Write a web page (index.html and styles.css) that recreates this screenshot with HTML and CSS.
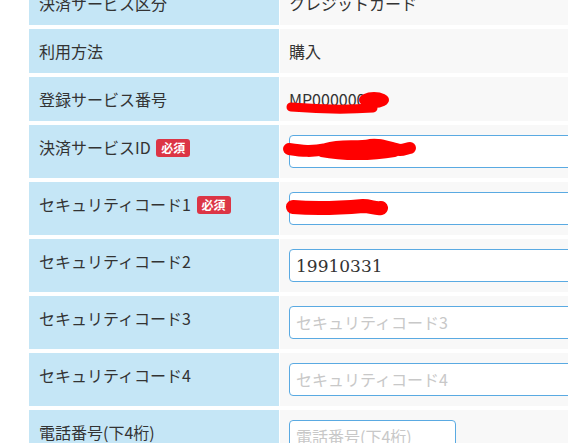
FILE: index.html
```html
<!DOCTYPE html>
<html lang="ja">
<head>
  <meta charset="UTF-8" />
  <meta name="viewport" content="width=device-width, initial-scale=1.0"/>
  <title>決済サービス登録</title>
  <link rel="stylesheet" href="styles.css">
</head>
<body>
  <table class="form-table">
    <tr>
      <th>決済サービス区分</th>
      <td>クレジットカード</td>
    </tr>
    <tr>
      <th>利用方法</th>
      <td>購入</td>
    </tr>
    <tr>
      <th>登録サービス番号</th>
      <td>
        <div class="masked">
          MP0000000
          <!-- 塗りつぶし -->
          <svg class="scribble s1" width="110" height="26" viewBox="0 0 110 26">
            <path d="M6 17 C30 19 60 20 88 18" stroke="#ff0000" stroke-width="9" stroke-linecap="round" fill="none"/>
            <ellipse cx="89" cy="10" rx="15" ry="8" fill="#ff0000"/>
          </svg>
        </div>
      </td>
    </tr>
    <tr>
      <th>決済サービスID <span class="required">必須</span></th>
      <td>
        <div class="masked">
          <input type="text" class="field" value="">
          <svg class="scribble s2" width="134" height="28" viewBox="0 0 134 28">
            <path d="M7 13 C20 15 30 16 44 13 C60 8 75 12 88 9 C100 7 110 13 118 14 C122 14 126 12 128 12" stroke="#ff0000" stroke-width="12" stroke-linecap="round" stroke-linejoin="round" fill="none"/>
            <path d="M40 15 C60 19 90 19 112 15" stroke="#ff0000" stroke-width="12" stroke-linecap="round" fill="none"/>
            <ellipse cx="94" cy="12" rx="14" ry="9" fill="#ff0000"/>
          </svg>
        </div>
      </td>
    </tr>
    <tr>
      <th>セキュリティコード1 <span class="required">必須</span></th>
      <td>
        <div class="masked">
          <input type="text" class="field" value="">
          <svg class="scribble s3" width="104" height="24" viewBox="0 0 104 24">
            <path d="M8 12 C30 14 55 13 78 11 C86 11 90 14 96 13" stroke="#ff0000" stroke-width="14" stroke-linecap="round" stroke-linejoin="round" fill="none"/>
          </svg>
        </div>
      </td>
    </tr>
    <tr>
      <th>セキュリティコード2</th>
      <td><input type="text" class="field" value="19910331"></td>
    </tr>
    <tr>
      <th>セキュリティコード3</th>
      <td><input type="text" class="field" placeholder="セキュリティコード3"></td>
    </tr>
    <tr>
      <th>セキュリティコード4</th>
      <td><input type="text" class="field" placeholder="セキュリティコード4"></td>
    </tr>
    <tr>
      <th>電話番号(下4桁)</th>
      <td><input type="text" class="field short" placeholder="電話番号(下4桁)"></td>
    </tr>
  </table>
</body>
</html>
```

FILE: styles.css
```css
* {
  box-sizing: border-box;
}

html, body {
  overflow: hidden;
}

body {
  margin: 0;
  background: #ffffff;
  color: #333333;
  font-family: "Noto Sans CJK JP", "Noto Sans", sans-serif;
  font-size: 16px;
}

.form-table {
  border-collapse: separate;
  border-spacing: 1px 4px;
  margin-top: -23px;
  margin-left: 28px;
  width: 760px;
  table-layout: fixed;
}

.form-table th,
.form-table td {
  padding: 10px;
  line-height: 24px;
  vertical-align: top;
  text-align: left;
  font-weight: normal;
  white-space: nowrap;
}

.form-table th {
  width: 250px;
  background-color: #c5e6f6;
}

.form-table td {
  background-color: #f8f8f8;
  padding-left: 9px;
}

.required {
  display: inline-block;
  margin-left: 2px;
  padding: 0 5px;
  height: 18px;
  line-height: 18px;
  border-radius: 3px;
  background-color: #dc3545;
  color: #ffffff;
  font-size: 12px;
  font-weight: bold;
  vertical-align: 1px;
}

.field {
  display: block;
  width: 100%;
  height: 33px;
  padding: 0 6px;
  border: 1px solid #5aaae2;
  border-radius: 4px;
  background: #ffffff;
  color: #333333;
  font-family: "DejaVu Serif", serif;
  font-size: 17px;
  outline: none;
}

.field::placeholder {
  color: #c8c8c8;
  font-family: "Noto Sans CJK JP", "Noto Sans", sans-serif;
  font-size: 16px;
}

.field.short {
  width: 167px;
}

/* 塗りつぶし部分 */
.masked {
  position: relative;
}

.scribble {
  position: absolute;
  pointer-events: none;
}

.s1 {
  left: -4px;
  top: 3px;
}

.s2 {
  left: -7px;
  top: 1px;
}

.s3 {
  left: -4px;
  top: 3px;
}
```
